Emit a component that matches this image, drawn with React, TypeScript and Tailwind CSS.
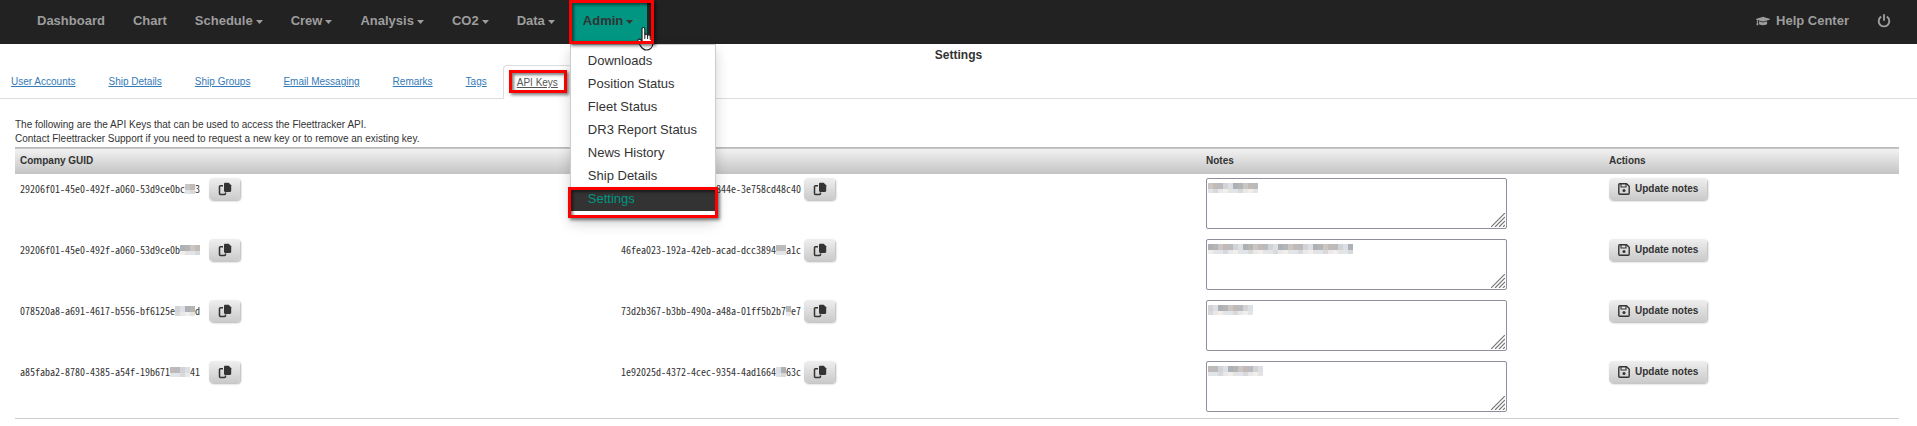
import { Fragment } from "react";
import { FaGraduationCap } from "react-icons/fa";

const menu = [
  { name: "Dashboard", drop: false },
  { name: "Chart", drop: false },
  { name: "Schedule", drop: true },
  { name: "Crew", drop: true },
  { name: "Analysis", drop: true },
  { name: "CO2", drop: true },
  { name: "Data", drop: true },
];

const adminItems = [
  "Downloads",
  "Position Status",
  "Fleet Status",
  "DR3 Report Status",
  "News History",
  "Ship Details",
];

const tabs = ["User Accounts", "Ship Details", "Ship Groups", "Email Messaging", "Remarks", "Tags"];

type Key = { start: string; hidden: number; end: string };
type Row = { company: Key; api: Key; note: number; seed: number };

const rows: Row[] = [
  {
    company: { start: "29206f01-45e0-492f-a060-53d9ce0bc", hidden: 2, end: "3" },
    api: { start: "844e-3e758cd48c40", hidden: 0, end: "" },
    note: 10,
    seed: 1,
  },
  {
    company: { start: "29206f01-45e0-492f-a060-53d9ce0b", hidden: 4, end: "" },
    api: { start: "46fea023-192a-42eb-acad-dcc3894", hidden: 2, end: "a1c" },
    note: 29,
    seed: 2,
  },
  {
    company: { start: "078520a8-a691-4617-b556-bf6125e", hidden: 4, end: "d" },
    api: { start: "73d2b367-b3bb-490a-a48a-01ff5b2b7", hidden: 1, end: "e7" },
    note: 9,
    seed: 3,
  },
  {
    company: { start: "a85faba2-8780-4385-a54f-19b671", hidden: 4, end: "41" },
    api: { start: "1e92025d-4372-4cec-9354-4ad1664", hidden: 2, end: "63c" },
    note: 11,
    seed: 4,
  },
];

const greys = ["#b9bbbe", "#c9c6c4", "#adb0b4", "#d3d3d6", "#c2bab6", "#b5b5b5", "#dcdfe3"];
const pales = ["#e9e9eb", "#dfe5ea", "#f1eeec", "#d9d9d9", "#e4e4e4"];

function Mosaic({ cells, seed }: { cells: number; seed: number }) {
  return (
    <svg aria-hidden="true" className="block" width={cells * 5} height={10} shapeRendering="crispEdges">
      {Array.from({ length: cells }, (_, i) => (
        <Fragment key={i}>
          <rect x={i * 5} y={0} width={5} height={6} fill={greys[(i * 3 + seed) % greys.length]} />
          <rect x={i * 5} y={6} width={5} height={4} fill={pales[(i * 2 + seed) % pales.length]} />
        </Fragment>
      ))}
    </svg>
  );
}

function Caret() {
  return (
    <svg aria-hidden="true" className="mt-[2px] ml-[3px]" width="7" height="4" viewBox="0 0 7 4">
      <path d="M0 0h7L3.500 4Z" fill="currentColor" />
    </svg>
  );
}

function PowerIcon() {
  return (
    <svg aria-hidden="true" width="14" height="14" viewBox="0 0 14 14" fill="none" stroke="currentColor">
      <path d="M4.200 2.600a5.300 5.300 0 1 0 5.600 0" strokeWidth="1.900" />
      <path d="M7 .3v6.500" strokeWidth="1.900" />
    </svg>
  );
}

function CopyIcon() {
  return (
    <svg aria-hidden="true" width="14" height="14" viewBox="0 0 14 14">
      <path d="M5 3.8H2.4a.9.9 0 0 0-.9.9v6.9c0 .5.4.9.9.9h4.2c.5 0 .9-.4.9-.9V10.600" fill="none" stroke="#333" strokeWidth="1.5" />
      <path d="M7.200.8h3.500L13.200 3.300v5.500c0 .7-.5 1.200-1.200 1.200H7.200C6.500 10 6 9.500 6 8.800V2C6 1.300 6.500.8 7.200.8Z" fill="#333" />
    </svg>
  );
}

function SaveIcon() {
  return (
    <svg aria-hidden="true" width="12" height="12" viewBox="0 0 12 12" fill="none" stroke="#333">
      <path d="M1.700.8h6.800l2.700 2.500v7c0 .5-.4.900-.9.900H1.700a.9.900 0 0 1-.9-.9V1.700c0-.5.4-.9.9-.9Z" strokeWidth="1.400" />
      <path d="M3 1v3h5V1" strokeWidth="1.100" />
      <circle cx="6" cy="7.500" r="1.500" fill="#333" stroke="none" />
    </svg>
  );
}

const buttonStyle =
  "flex h-[22px] shrink-0 items-center rounded-[4px] bg-linear-to-b from-[#efefef] to-[#cacaca] shadow-[1px_1px_2px_rgba(0,0,0,0.3)]";

function KeyCell({ value, seed, gap, align }: { value: Key; seed: number; gap: string; align: string }) {
  return (
    <div className={`flex items-center ${gap}`}>
      <code
        className={`flex w-[180px] items-center font-['Noto_Sans_Mono_CJK_JP','Liberation_Mono',monospace] text-[10px] leading-[14px] whitespace-pre ${align}`}
      >
        {value.start}
        {value.hidden > 0 && <Mosaic cells={value.hidden} seed={seed} />}
        {value.end}
      </code>
      <button type="button" aria-label="Copy key" className={`${buttonStyle} w-[31px] justify-center`}>
        <CopyIcon />
      </button>
    </div>
  );
}

function Highlight({ className }: { className: string }) {
  return (
    <span
      aria-hidden="true"
      className={`pointer-events-none absolute border-3 border-[#ff0000] shadow-[2px_2px_3px_rgba(0,0,0,0.5),inset_2px_2px_3px_rgba(0,0,0,0.5)] ${className}`}
    />
  );
}

function Hand() {
  return (
    <svg aria-hidden="true" className="pointer-events-none absolute top-[26px] left-[68px] z-20" width="18" height="25" viewBox="0 0 18 25">
      <path
        d="M5 15V3c0-2 2.800-2 2.800 0v6c.5-1.500 2.800-1.200 2.800.5.700-1.200 2.700-.8 2.700.8.800-.9 2.500-.4 2.500 1.200v5.500c0 4-2.500 7-6.500 7-3.500 0-4.500-2-6-4.500L1 15.500c-1-2 1.500-3 2.700-1.700Z"
        fill="#fff"
        stroke="#222"
        strokeWidth="1.200"
      />
      <path d="M7.800 9v4M10.600 10v3M13.300 11v3" stroke="#222" />
    </svg>
  );
}

export default function App() {
  return (
    <div className="bg-white font-['Liberation_Sans',Arial,sans-serif] text-[10px] text-[#333]">
      <nav className="flex h-11 items-stretch justify-between bg-[#222] pr-3 pl-[23px] text-[13px] font-bold text-[#9d9d9d]">
        <ul className="flex">
          {menu.map((m) => (
            <li key={m.name} className="flex">
              <a href="#" className="flex items-center px-[14px] pb-[3px]">
                {m.name}
                {m.drop && <Caret />}
              </a>
            </li>
          ))}
          <li className="relative flex">
            <a href="#" className="flex items-center bg-[#009682] px-[14px] pb-[3px] text-[#333]">
              Admin
              <Caret />
            </a>
            <ul className="absolute top-full left-px z-10 w-[146px] border border-[#ccc] bg-white pt-1 pb-[5px] font-normal text-[#333] shadow-[0_6px_12px_rgba(0,0,0,0.18)]">
              {adminItems.map((t) => (
                <li key={t}>
                  <a href="#" className="block px-[17px] leading-[23px] whitespace-nowrap">
                    {t}
                  </a>
                </li>
              ))}
              <li className="relative">
                <a href="#" className="block bg-[#333] px-[17px] leading-[24px] text-[#009682]">
                  Settings
                </a>
                <Highlight className="top-0 -right-[3px] -left-[3px] h-[31px]" />
              </li>
            </ul>
            <Highlight className="top-0 left-0 z-30 h-11 w-[85px]" />
            <Hand />
          </li>
        </ul>
        <ul className="flex">
          <li className="flex">
            <a href="#" className="flex items-center gap-[6px] px-[14px] pb-[3px]">
              <FaGraduationCap aria-hidden="true" className="size-[14px]" />
              Help Center
            </a>
          </li>
          <li className="flex">
            <a href="#" aria-label="Log out" className="flex items-center px-[14px] pb-[3px]">
              <PowerIcon />
            </a>
          </li>
        </ul>
      </nav>

      <h1 className="pt-px text-center text-[12px] leading-[20px] font-bold">Settings</h1>

      <ul className="flex h-[34px] gap-[33px] border-b border-[#ddd] pl-[11px] leading-[33px] text-[#337ab7]">
        {tabs.map((t) => (
          <li key={t}>
            <a href="#" className="underline">
              {t}
            </a>
          </li>
        ))}
        <li className="relative -ml-[17px] h-[34px] rounded-t-[4px] border border-b-0 border-[#ddd] bg-white px-[13px] text-[#555]">
          <a href="#" className="underline">
            API Keys
          </a>
          <Highlight className="top-1 left-[5px] h-[23px] w-[58px]" />
        </li>
      </ul>

      <main className="pt-[19px] pr-[18px] pl-[15px]">
        <p className="pb-px leading-[14px]">
          The following are the API Keys that can be used to access the Fleettracker API.
          <br />
          Contact Fleettracker Support if you need to request a new key or to remove an existing key.
        </p>
        <table className="w-full table-fixed border-b border-[#ccc] text-left">
          <thead>
            <tr className="h-[26px] border-t border-[#bbb] bg-linear-to-b from-[#f2f2f2] to-[#c4c4c4]">
              <th className="w-[601px] px-[5px]">Company GUID</th>
              <th className="w-[585px] px-[5px]" aria-label="API Key" />
              <th className="w-[403px] px-[5px]">Notes</th>
              <th className="px-[5px]">Actions</th>
            </tr>
          </thead>
          <tbody>
            {rows.map((r) => (
              <tr key={r.seed} className="h-[61px] align-top last:h-[62px]">
                <td className="px-[5px] pt-1">
                  <KeyCell value={r.company} seed={r.seed} gap="gap-[9px]" align="justify-start" />
                </td>
                <td className="px-[5px] pt-1">
                  <KeyCell value={r.api} seed={r.seed + 2} gap="gap-[3px]" align="justify-end" />
                </td>
                <td className="px-[5px] pt-1">
                  <div className="relative w-[301px]">
                    <textarea aria-label="Notes" className="block h-[51px] w-full resize-none rounded-[2px] border border-[#8f8f9d] bg-white" />
                    <div className="absolute top-[5px] left-[2px]">
                      <Mosaic cells={r.note} seed={r.seed} />
                    </div>
                    <svg aria-hidden="true" className="absolute right-[2px] bottom-[2px]" width="14" height="14" stroke="#777" strokeWidth="1.200">
                      <path d="M0 14 14 0M4 14 14 4M8 14l6-6M12 14l2-2" />
                    </svg>
                  </div>
                </td>
                <td className="px-[5px] pt-1">
                  <button type="button" className={`${buttonStyle} gap-[5px] px-[9px] font-bold`}>
                    <SaveIcon />
                    Update notes
                  </button>
                </td>
              </tr>
            ))}
          </tbody>
        </table>
      </main>
    </div>
  );
}
